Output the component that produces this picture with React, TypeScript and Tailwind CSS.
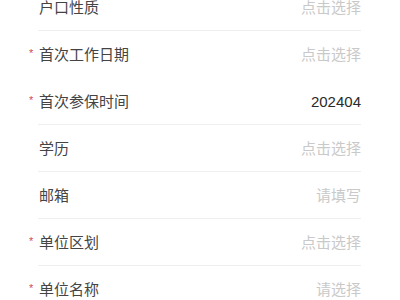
import React from "react";

type Row = {
  label: string;
  required?: boolean;
  value?: string;
  placeholder?: string;
  divider?: boolean;
};

const ROWS: Row[] = [
  { label: "户口性质", placeholder: "点击选择", divider: true },
  { label: "首次工作日期", required: true, placeholder: "点击选择", divider: false },
  { label: "首次参保时间", required: true, value: "202404", divider: true },
  { label: "学历", placeholder: "点击选择", divider: true },
  { label: "邮箱", placeholder: "请填写", divider: true },
  { label: "单位区划", required: true, placeholder: "点击选择", divider: true },
  { label: "单位名称", required: true, placeholder: "请选择", divider: true },
];

export default function App() {
  return (
    <div
      className="h-[300px] w-[400px] overflow-hidden bg-white"
      style={{ fontFamily: '"Liberation Sans", "Noto Sans CJK SC", sans-serif' }}
    >
      <div className="-mt-[16px] flex flex-col">
        {ROWS.map((row) => (
          <div
            key={row.label}
            className={
              row.divider
                ? "ml-[38px] mr-[39px] flex h-[47px] items-center justify-between border-b border-[#efefef]"
                : "ml-[38px] mr-[39px] flex h-[47px] items-center justify-between border-b border-transparent"
            }
          >
            <div className="relative flex items-center pl-px text-[15px] leading-none text-[#444444]">
              {row.required && (
                <span className="absolute -left-[9px] top-[1px] text-[11px] leading-none text-[#d04a5a]">*</span>
              )}
              {row.label}
            </div>
            {row.value ? (
              <span className="text-[15px] leading-none text-[#2a2a2a]">{row.value}</span>
            ) : (
              <span className="text-[15px] leading-none text-[#c9c9c9]">{row.placeholder}</span>
            )}
          </div>
        ))}
      </div>
    </div>
  );
}
